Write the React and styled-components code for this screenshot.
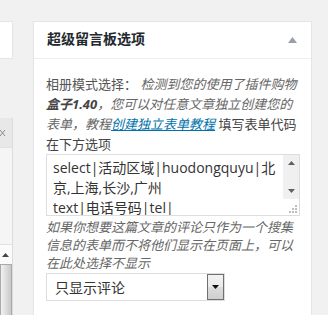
import React from "react";
import styled, { createGlobalStyle } from "styled-components";

const Global = createGlobalStyle`
  html, body { margin: 0; padding: 0; background: #f1f1f1; }
  body { font-family: "Open Sans", "Noto Sans CJK SC", sans-serif; }
`;

const Page = styled.div`
  display: flex;
  align-items: flex-start;
  gap: 20px;
  width: 328px;
  height: 315px;
  overflow: hidden;
`;

const LeftColumn = styled.div`
  width: 13px;
  flex: none;
  display: flex;
  flex-direction: column;
  padding-top: 21px;
`;

const StubBox = styled.div`
  height: 36px;
  background: #fff;
  border: 1px solid #e5e5e5;
  border-left: none;
`;

const SidePanel = styled.div`
  margin-top: 59px;
  display: flex;
  flex-direction: column;
  border-right: 1px solid #dcdcdc;
`;

const SideHeader = styled.div`
  height: 29px;
  background: #e8e8e8;
  display: flex;
  align-items: center;
`;

const SideBody = styled.div`
  height: 96px;
  background: #f5f5f5;
  border-top: 1px solid #e2e2e2;
`;

const SideArrow = styled.div`
  height: 19px;
  background: #fbfbfb;
  border-top: 1px solid #e2e2e2;
  display: flex;
  align-items: center;
  padding-left: 2px;
`;

const SideThumb = styled.div`
  height: 60px;
  width: 10px;
  background: linear-gradient(to right, #f2f2f2, #c8c8c8);
  border: 1px solid #a9a9a9;
  border-bottom: none;
`;

const Panel = styled.div`
  width: 277px;
  margin-top: 21px;
  background: #fff;
  border: 1px solid #e5e5e5;
  box-shadow: 0 1px 1px rgba(0, 0, 0, 0.04);
  min-height: 300px;
`;

const PanelHeader = styled.div`
  height: 36px;
  display: flex;
  align-items: center;
  justify-content: space-between;
  padding: 0 14px 0 13px;
  border-bottom: 1px solid #eee;
`;

const Title = styled.h2`
  margin: 0;
  font-size: 14px;
  font-weight: 700;
  color: #23282d;
  line-height: 20px;
  position: relative;
  top: -1px;
`;

const PanelBody = styled.div`
  padding: 15px 12px 12px 12px;
`;

const Para = styled.p`
  margin: 0;
  font-size: 13px;
  line-height: 20px;
  color: #555;
`;

const Note = styled.em`
  color: #666;
  font-style: italic;
`;

const Strong = styled.strong`
  color: #444;
  font-style: italic;
  font-weight: 700;
`;

const TutorialLink = styled.a`
  color: #0073aa;
  text-decoration: underline;
  font-style: italic;
`;

const Plain = styled.span`
  color: #444;
`;

const Field = styled.div`
  display: flex;
  width: 252px;
  height: 60px;
  border: 1px solid #ddd;
  background: #fff;
`;

const TextArea = styled.textarea`
  flex: 1;
  min-width: 0;
  border: none;
  outline: none;
  resize: none;
  overflow: hidden;
  margin: 0;
  padding: 3px 2px 0 6px;
  font-family: "Open Sans", "Noto Sans CJK SC", sans-serif;
  font-size: 14px;
  line-height: 20px;
  color: #333;
  background: #fff;
`;

const ScrollCol = styled.div`
  width: 16px;
  flex: none;
  display: flex;
  flex-direction: column;
`;

const Track = styled.div`
  height: 44px;
  background: #f0f0f0;
  display: flex;
  flex-direction: column;
  justify-content: space-between;
  align-items: center;
  padding: 6px 0;
  box-sizing: border-box;
`;

const Grip = styled.div`
  flex: 1;
  display: flex;
  align-items: flex-end;
  justify-content: flex-end;
  padding: 0 2px 2px 0;
`;

const Hint = styled.p`
  margin: 2px 0 0 0;
  font-size: 13px;
  line-height: 18px;
  color: #666;
  font-style: italic;
`;

const SelectBox = styled.div`
  margin-top: 1px;
  width: 169px;
  height: 26px;
  border: 1px solid #ddd;
  background: #fff;
  display: flex;
  align-items: center;
  justify-content: space-between;
  padding-left: 8px;
  font-size: 14px;
  color: #333;
  cursor: default;
`;

const DropButton = styled.span`
  width: 15px;
  height: 24px;
  border: 1px solid #707070;
  background: linear-gradient(to bottom, #f2f2f2 0%, #ebebeb 50%, #dddddd 51%, #cfcfcf 100%);
  display: flex;
  align-items: center;
  justify-content: center;
`;

const Tri = ({ dir = "up", color = "#555", w = 7, h = 4 }) => (
  <svg width={w} height={h} viewBox={`0 0 ${w} ${h}`}>
    {dir === "up" ? (
      <polygon points={`0,${h} ${w},${h} ${w / 2},0`} fill={color} />
    ) : (
      <polygon points={`0,0 ${w},0 ${w / 2},${h}`} fill={color} />
    )}
  </svg>
);

const CloseMark = () => (
  <svg width="6" height="8" viewBox="0 0 6 8">
    <path d="M0 1 L5 7 M5 1 L0 7" stroke="#8a8a8a" strokeWidth="1" fill="none" />
  </svg>
);

const GripDots = () => (
  <svg width="8" height="8" viewBox="0 0 8 8">
    {[
      [6, 0],
      [3, 3],
      [6, 3],
      [0, 6],
      [3, 6],
      [6, 6],
    ].map(([x, y], i) => (
      <rect key={i} x={x} y={y} width="2" height="2" fill="#bdbdbd" />
    ))}
  </svg>
);

export default function App() {
  return (
    <>
      <Global />
      <Page>
        <LeftColumn>
          <StubBox />
          <SidePanel>
            <SideHeader>
              <CloseMark />
            </SideHeader>
            <SideBody />
            <SideArrow>
              <Tri dir="up" color="#444" w={7} h={4} />
            </SideArrow>
            <SideThumb />
          </SidePanel>
        </LeftColumn>
        <Panel>
          <PanelHeader>
            <Title>超级留言板选项</Title>
            <Tri dir="up" color="#999fa6" w={9} h={6} />
          </PanelHeader>
          <PanelBody>
            <Para>
              相册模式选择：{" "}
              <Note>
                检测到您的使用了插件购物<Strong>盒子1.40</Strong>，您可以对任意文章独立创建您的表单，教程
              </Note>
              <TutorialLink href="#">创建独立表单教程</TutorialLink>{" "}
              <Plain>填写表单代码在下方选项</Plain>
            </Para>
            <Field>
              <TextArea
                readOnly
                defaultValue={"select|活动区域|huodongquyu|北京,上海,长沙,广州\ntext|电话号码|tel|"}
              />
              <ScrollCol>
                <Track>
                  <Tri dir="up" color="#606060" w={7} h={4} />
                  <Tri dir="down" color="#606060" w={7} h={4} />
                </Track>
                <Grip>
                  <GripDots />
                </Grip>
              </ScrollCol>
            </Field>
            <Hint>如果你想要这篇文章的评论只作为一个搜集信息的表单而不将他们显示在页面上，可以在此处选择不显示</Hint>
            <SelectBox role="combobox">
              <span>只显示评论</span>
              <DropButton>
                <Tri dir="down" color="#111" w={7} h={4} />
              </DropButton>
            </SelectBox>
          </PanelBody>
        </Panel>
      </Page>
    </>
  );
}
